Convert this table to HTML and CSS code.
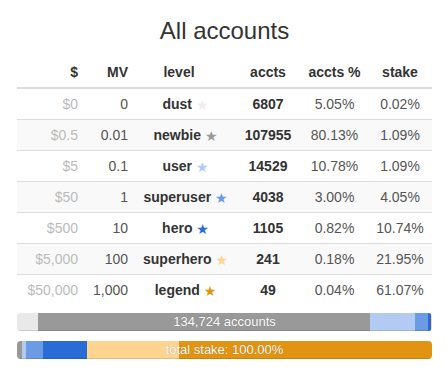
FILE: index.html
```html
<!DOCTYPE html>
<html>
<head>
<meta charset="utf-8">
<link rel="stylesheet" href="styles.css">
</head>
<body>
<div class="wrap">
  <h2 class="title">All accounts</h2>
  <table class="accts">
    <colgroup>
      <col class="c-usd"><col class="c-mv"><col class="c-level"><col class="c-n"><col class="c-pct"><col class="c-stake">
    </colgroup>
    <thead>
      <tr><th class="r">$</th><th class="r">MV</th><th class="lvl">level</th><th>accts</th><th>accts %</th><th>stake</th></tr>
    </thead>
    <tbody>
      <tr><td class="usd">$0</td><td class="r">0</td><td class="lvl">dust <span class="star s-dust">★</span></td><td class="n">6807</td><td>5.05%</td><td>0.02%</td></tr>
      <tr><td class="usd">$0.5</td><td class="r">0.01</td><td class="lvl">newbie <span class="star s-newbie">★</span></td><td class="n">107955</td><td>80.13%</td><td>1.09%</td></tr>
      <tr><td class="usd">$5</td><td class="r">0.1</td><td class="lvl">user <span class="star s-user">★</span></td><td class="n">14529</td><td>10.78%</td><td>1.09%</td></tr>
      <tr><td class="usd">$50</td><td class="r">1</td><td class="lvl">superuser <span class="star s-superuser">★</span></td><td class="n">4038</td><td>3.00%</td><td>4.05%</td></tr>
      <tr><td class="usd">$500</td><td class="r">10</td><td class="lvl">hero <span class="star s-hero">★</span></td><td class="n">1105</td><td>0.82%</td><td>10.74%</td></tr>
      <tr><td class="usd">$5,000</td><td class="r">100</td><td class="lvl">superhero <span class="star s-superhero">★</span></td><td class="n">241</td><td>0.18%</td><td>21.95%</td></tr>
      <tr><td class="usd">$50,000</td><td class="r">1,000</td><td class="lvl">legend <span class="star s-legend">★</span></td><td class="n">49</td><td>0.04%</td><td>61.07%</td></tr>
    </tbody>
  </table>
  <div class="progress">
    <div class="seg b-dust" style="width:5.05%"></div>
    <div class="seg b-newbie" style="width:80.13%"></div>
    <div class="seg b-user" style="width:10.78%"></div>
    <div class="seg b-superuser" style="width:3.00%"></div>
    <div class="seg b-hero" style="width:0.82%"></div>
    <div class="seg b-superhero" style="width:0.18%"></div>
    <div class="seg b-legend" style="width:0.04%"></div>
    <span class="label">134,724 accounts</span>
  </div>
  <div class="progress">
    <div class="seg b-dust" style="width:0.02%"></div>
    <div class="seg b-newbie" style="width:1.09%"></div>
    <div class="seg b-user" style="width:1.09%"></div>
    <div class="seg b-superuser" style="width:4.05%"></div>
    <div class="seg b-hero" style="width:10.74%"></div>
    <div class="seg b-superhero" style="width:21.95%"></div>
    <div class="seg b-legend" style="width:61.07%"></div>
    <span class="label">total stake: 100.00%</span>
  </div>
</div>
</body>
</html>
```
FILE: styles.css
```css
html, body {
  margin: 0;
  padding: 0;
  background: #fff;
}
body {
  font-family: "Liberation Sans", Arial, sans-serif;
  font-size: 14px;
  color: #333;
}
.wrap {
  width: 415px;
  margin-left: 17px;
}
.title {
  margin: 17px 0 13px;
  font-size: 24px;
  line-height: 27px;
  font-weight: 400;
  text-align: center;
  color: #333;
}
.accts {
  width: 415px;
  border-collapse: collapse;
  table-layout: fixed;
}
.c-usd { width: 73px; }
.c-mv { width: 46px; }
.c-level { width: 99px; }
.c-n { width: 66px; }
.c-pct { width: 67px; }
.c-stake { width: 64px; }
.accts th, .accts td {
  padding: 5px 0;
  height: 20px;
  line-height: 20px;
  text-align: center;
  white-space: nowrap;
}
.accts th {
  font-weight: 700;
  color: #333;
  border-bottom: 2px solid #ddd;
}
.accts td {
  border-top: 1px solid #ddd;
  color: #555;
}
.accts tbody tr:first-child td {
  border-top: 0;
}
.accts tbody tr:nth-child(even) td {
  background: #f9f9f9;
}
.accts th.r, .accts td.r {
  text-align: right;
  padding-right: 8px;
}
.accts td.usd {
  text-align: right;
  padding-right: 12px;
  color: #bbb;
}
.accts th.r:first-child {
  padding-right: 12px;
}
.accts th.lvl {
  padding-right: 13px;
}
.accts td.lvl {
  font-weight: 700;
  color: #333;
}
.accts td.n {
  font-weight: 700;
  color: #333;
}
.star {
  display: inline-block;
  font-family: "DejaVu Sans", sans-serif;
  font-weight: 400;
  font-size: 14px;
  line-height: 14px;
  vertical-align: -1px;
}
.s-dust { color: #eeeeee; }
.s-newbie { color: #999999; }
.s-user { color: #b3cbf2; }
.s-superuser { color: #6b9be4; }
.s-hero { color: #2a6cd6; }
.s-superhero { color: #fdd590; }
.s-legend { color: #e19412; }

.progress {
  position: relative;
  display: flex;
  height: 18px;
  margin-top: 8px;
  border-radius: 4px;
  overflow: hidden;
  background: #f5f5f5;
  box-shadow: inset 0 1px 2px rgba(0,0,0,.1);
}
.progress + .progress {
  margin-top: 10px;
}
.seg {
  height: 100%;
  flex: none;
  box-shadow: inset 0 -1px 0 rgba(0,0,0,.12);
}
.b-dust { background: #e9e9e9; }
.b-newbie { background: #999999; }
.b-user { background: #b3cbf2; }
.b-superuser { background: #6b9be4; }
.b-hero { background: #2a6cd6; }
.b-superhero { background: #fdd590; }
.b-legend { background: #e19412; }
.label {
  position: absolute;
  left: 0;
  right: 0;
  top: 0;
  line-height: 18px;
  text-align: center;
  color: #fff;
  font-size: 13px;
  text-shadow: 0 0 1px rgba(0,0,0,.3);
}
```
